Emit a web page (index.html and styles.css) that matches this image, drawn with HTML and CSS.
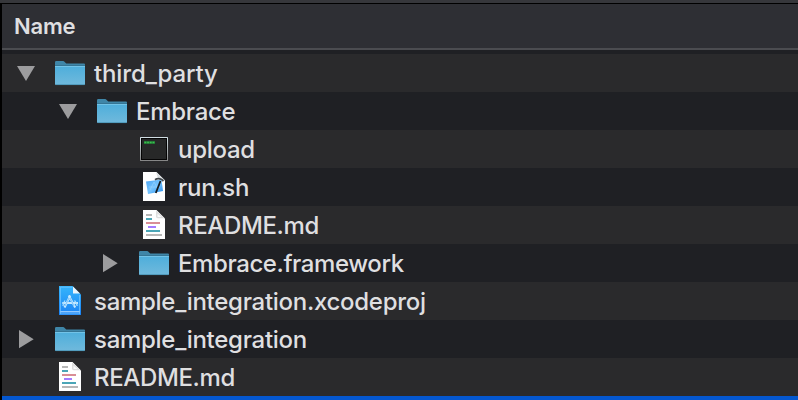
FILE: index.html
```html
<!DOCTYPE html>
<html lang="en">
<head>
<meta charset="utf-8">
<title>Files</title>
<link rel="stylesheet" href="styles.css">
</head>
<body>
<svg width="0" height="0" class="defs">
  <defs>
    <linearGradient id="front" x1="0" y1="0" x2="0" y2="1"><stop offset="0" stop-color="#4daedb"/><stop offset="1" stop-color="#70b9dc"/></linearGradient>
    <linearGradient id="blue" x1="0" y1="0" x2="0" y2="1"><stop offset="0" stop-color="#35b5fb"/><stop offset="1" stop-color="#1b83f5"/></linearGradient>
    <linearGradient id="frame" x1="0" y1="0" x2="0" y2="1"><stop offset="0" stop-color="#d3e0e5"/><stop offset="1" stop-color="#858585"/></linearGradient>
    <linearGradient id="plan" x1="0" y1="0" x2="1" y2="1"><stop offset="0" stop-color="#4da5f4"/><stop offset=".5" stop-color="#75c4ff"/><stop offset="1" stop-color="#258cec"/></linearGradient>
  </defs>
  <symbol id="open" viewBox="0 0 20 20"><path d="M1 2H19L10 17Z" fill="#9c9c9e"/></symbol>
  <symbol id="closed" viewBox="0 0 20 20"><path d="M3 0V18.3L17.7 9.2Z" fill="#9c9c9e"/></symbol>
  <symbol id="folder" viewBox="0 0 32 32">
    <path d="M1 10V5.2Q1 4 2.2 4H9Q10 4 10.7 5L11.7 6Q12.2 6.6 13 6.6H30Q31 6.6 31 7.6V12H1Z" fill="#3f86a8"/>
    <path d="M1 8.6H31V27Q31 28 30 28H2Q1 28 1 27Z" fill="url(#front)"/>
    <path d="M1 8.5H31" stroke="#316c88" stroke-width=".8"/><path d="M1 9.5H31" stroke="#72c3e7"/>
    <path d="M1.5 27.6H30.5" stroke="#4790b2" stroke-width=".8"/>
  </symbol>
  <symbol id="terminal" viewBox="0 0 32 32">
    <rect x="2" y="4" width="28" height="24" rx=".6" fill="url(#frame)"/>
    <rect x="3" y="5" width="26" height="22" fill="#050505"/><rect x="4" y="6" width="24" height="20" fill="#272828"/>
    <path d="M6 9.5H17" stroke="#218335" stroke-width="2.6"/><path d="M6.5 9.5H17" stroke="#3fbd51" stroke-width="1.7" stroke-dasharray="1.7 1"/>
  </symbol>
  <symbol id="script" viewBox="0 0 32 32">
    <path d="M5 1H18.5L27 9.5V30H5Z" fill="#fff"/>
    <path d="M18 1L20 7.5L27 9.5Z" fill="#d9dde0"/>
    <path d="M8 10.5L23.5 8.5L25 20L10 23Z" fill="url(#plan)"/>
    <path d="M12 19L16 11L20 18M11 16H22" stroke="#a5daff" fill="none" opacity=".5"/>
    <path d="M22.5 10L17.8 22" stroke="#161a1e" stroke-width="1.8"/><path d="M17 8.7Q20 6.8 23.7 8.5L25.5 10" stroke="#42484d" stroke-width="1.8" fill="none"/>
  </symbol>
  <symbol id="markdown" viewBox="0 0 32 32">
    <path d="M5 1H18.5L27 9.5V30H5Z" fill="#fff"/>
    <path d="M18 1.5V8Q18.5 9.2 20 9.2H26.5Z" fill="#dedede"/><path d="M19.5 4.7V8H23.6Z" fill="#fafafa"/>
    <path d="M8 6H14M8 26H24" stroke="#b7b7b7" stroke-width="2"/>
    <path d="M8 10H14M8 22H22" stroke="#4ba6b7" stroke-width="2"/>
    <path d="M8 14H22" stroke="#d98e96" stroke-width="2"/><path d="M10 18H18" stroke="#a57bff" stroke-width="2"/>
  </symbol>
  <symbol id="project" viewBox="0 0 32 32">
    <path d="M5 1H18.5L27 9.5V30H5Z" fill="url(#blue)"/>
    <path d="M6.5 28.8V2.2H18.5M25.5 10V28.8M6 28.8H26" fill="none" stroke="#79c8ff" stroke-width=".7"/><path d="M6.5 26.8H25.5" stroke="#d7efff" stroke-width=".9"/>
    <path d="M19 1.5V8.5H26Z" fill="#eaf4fa"/>
    <path d="M10.5 22.5L16.3 10.5M14.7 10.5L21.2 22.5M8.3 18H24" fill="none" stroke="#c5e8ff" stroke-width="2.1"/>
    <path d="M9 21Q9 18 11 15.5M20.5 15.5Q23 18 23.2 21" fill="none" stroke="#ace0ff" stroke-width="1.2"/>
    <path d="M11 21L15 13M16 13L20 21" stroke="#3ca6f9" stroke-width=".6"/>
  </symbol>
</svg>
<main class="browser">
  <header class="heading">Name</header>
  <div class="list">
    <div class="row"><svg class="arrow"><use href="#open"/></svg><svg class="icon"><use href="#folder"/></svg><span class="name party">third_party</span></div>
    <div class="row level-1"><svg class="arrow"><use href="#open"/></svg><svg class="icon"><use href="#folder"/></svg><span class="name">Embrace</span></div>
    <div class="row level-2"><svg class="arrow"></svg><svg class="icon"><use href="#terminal"/></svg><span class="name">upload</span></div>
    <div class="row level-2"><svg class="arrow"></svg><svg class="icon"><use href="#script"/></svg><span class="name">run.sh</span></div>
    <div class="row level-2"><svg class="arrow"></svg><svg class="icon"><use href="#markdown"/></svg><span class="name readme">README.md</span></div>
    <div class="row level-2"><svg class="arrow"><use href="#closed"/></svg><svg class="icon"><use href="#folder"/></svg><span class="name framework">Embrace.framework</span></div>
    <div class="row"><svg class="arrow"></svg><svg class="icon"><use href="#project"/></svg><span class="name">sample_integration.xcodeproj</span></div>
    <div class="row"><svg class="arrow"><use href="#closed"/></svg><svg class="icon"><use href="#folder"/></svg><span class="name">sample_integration</span></div>
    <div class="row"><svg class="arrow"></svg><svg class="icon"><use href="#markdown"/></svg><span class="name readme">README.md</span></div>
  </div>
  <div class="selection"></div>
</main>
</body>
</html>
```
FILE: styles.css
```css
* { box-sizing: border-box; }
body { margin: 0; background: #000; overflow: hidden; font-family: Inter, "Liberation Sans", sans-serif; color: #dfdfe0; }
.defs { display: block; }
.browser { height: 400px; border-top: 3px solid #36373b; padding-top: 1px; padding-left: 2px; display: flex; flex-direction: column; }
.heading { height: 46px; flex: none; padding-left: 12px; background: #2e2f34; border-bottom: 2px solid #4b4c50; font-size: 22px; font-weight: 600; line-height: 44px; letter-spacing: -.2px; }
.list { padding-top: 4px; background: #1f2024; }
.row { height: 38px; display: flex; align-items: flex-start; padding-left: 14px; background: #1f2024; }
.row:nth-child(odd) { background: #2a2a2c; }
.level-1 { padding-left: 56px; }
.level-2 { padding-left: 98px; }
.arrow { width: 20px; height: 20px; margin-top: 10px; flex: none; }
.icon { width: 32px; height: 32px; margin: 3px 8px 0 18px; flex: none; }
.name { padding-top: 1px; font-size: 24px; font-weight: 450; line-height: 38px; letter-spacing: -.28px; white-space: nowrap; }
.party { letter-spacing: -.15px; }
.readme { letter-spacing: -.36px; }
.framework { letter-spacing: -.41px; }
.selection { height: 4px; background: #0457d0; }
```
